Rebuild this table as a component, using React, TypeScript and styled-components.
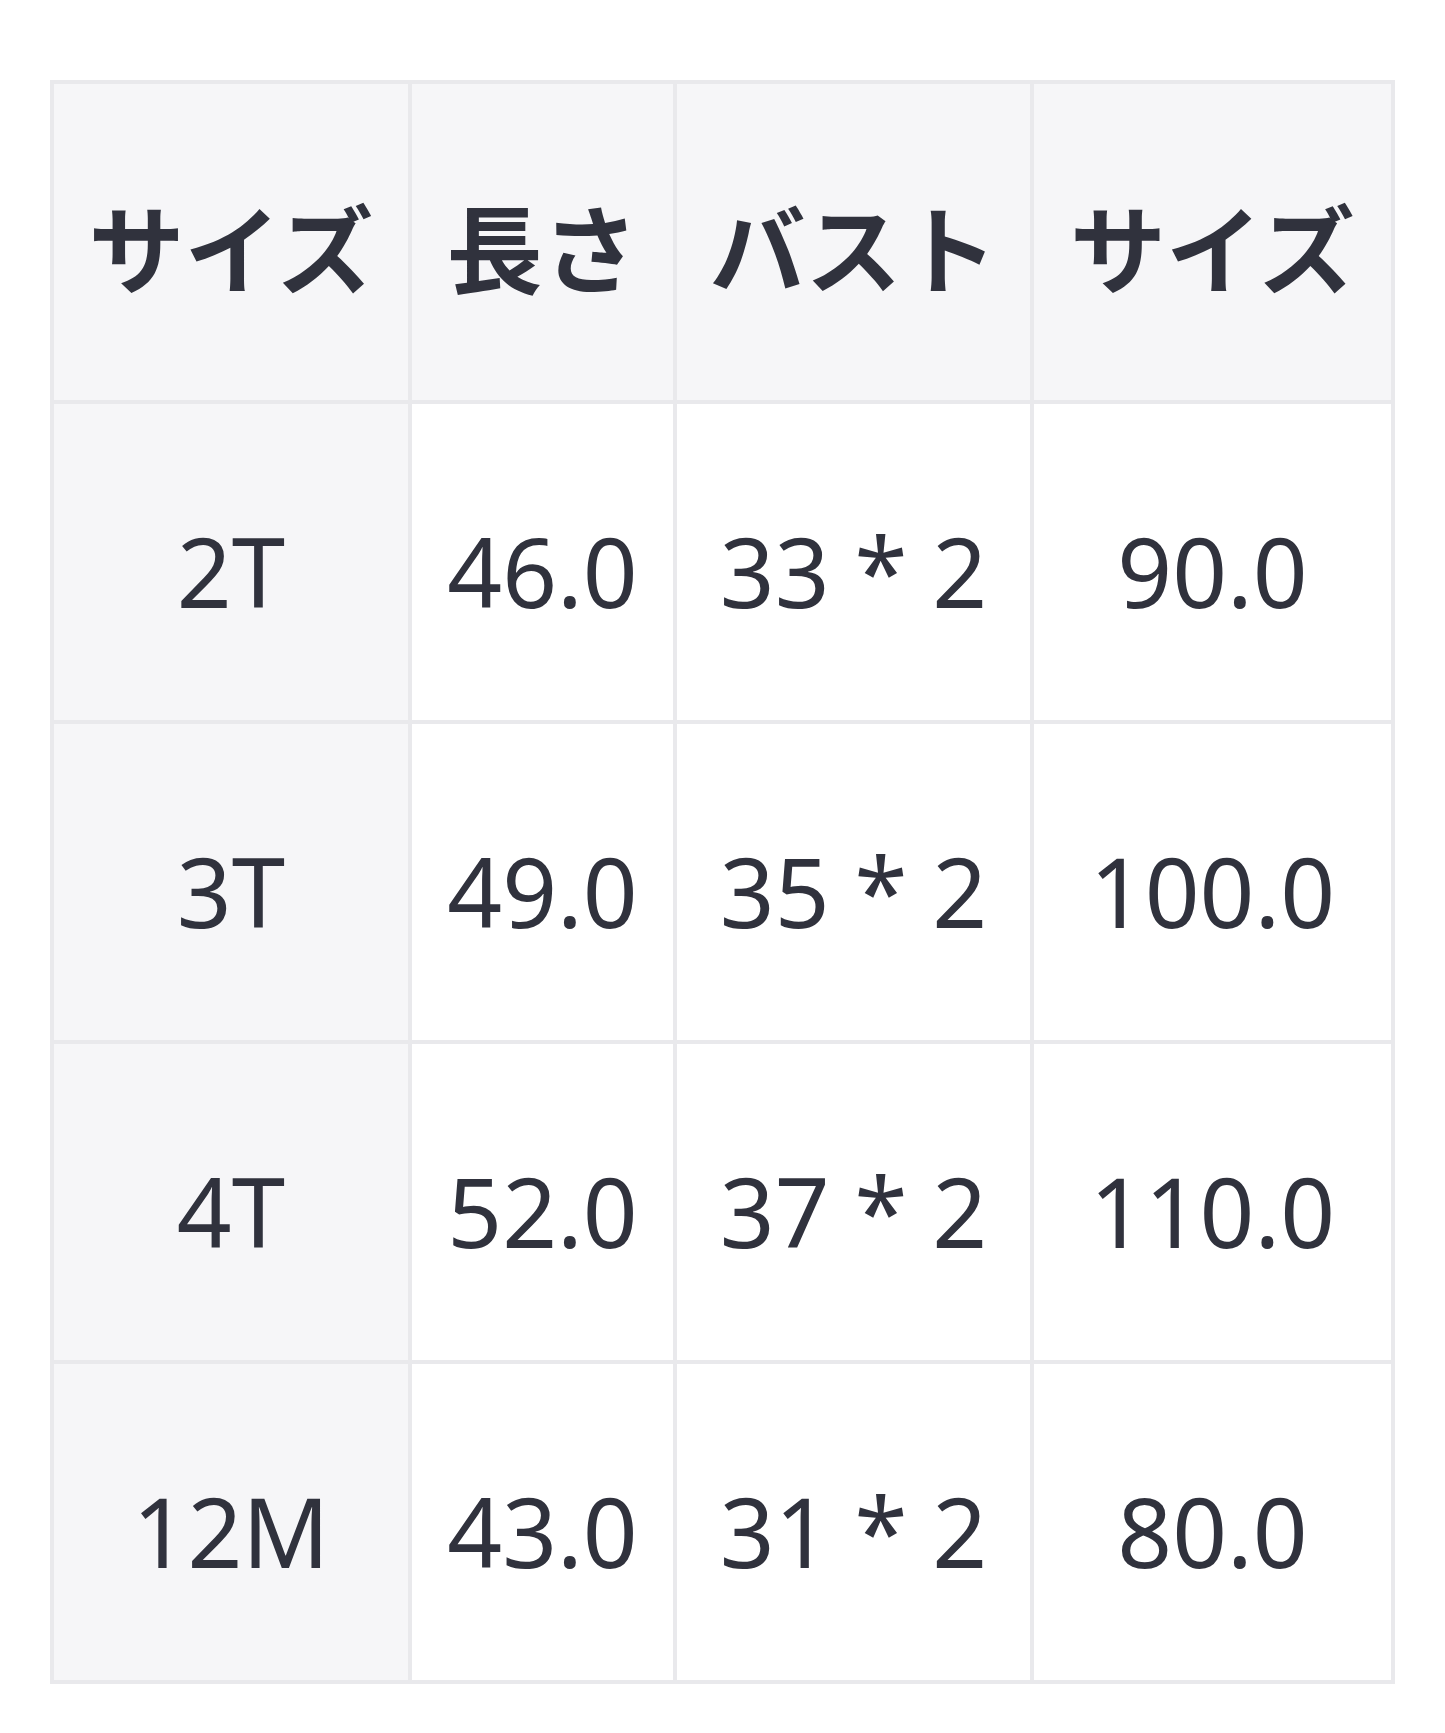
import React from 'react';
import styled, { createGlobalStyle } from 'styled-components';

const GlobalStyle = createGlobalStyle`
  html, body {
    margin: 0;
    padding: 0;
    background: #ffffff;
  }
  body {
    font-family: "Noto Sans", "Noto Sans CJK JP", sans-serif;
    color: #30323d;
  }
`;

const headers = ['サイズ', '長さ', 'バスト', 'サイズ'];

const rows = [
  ['2T', '46.0', '33 * 2', '90.0'],
  ['3T', '49.0', '35 * 2', '100.0'],
  ['4T', '52.0', '37 * 2', '110.0'],
  ['12M', '43.0', '31 * 2', '80.0'],
];

const colWidths = [354, 261, 353, 357];

const App = () => {
  return (
    <>
      <GlobalStyle />
      <Page>
        <SizeTable>
          <colgroup>
            {colWidths.map((w, i) => (
              <col key={i} style={{ width: w + 4 }} />
            ))}
          </colgroup>
          <thead>
            <tr>
              {headers.map((h, i) => (
                <HeadCell key={i}>{h}</HeadCell>
              ))}
            </tr>
          </thead>
          <tbody>
            {rows.map((row, r) => (
              <tr key={r}>
                {row.map((value, c) => (
                  <Cell key={c} $shaded={c === 0}>
                    {value}
                  </Cell>
                ))}
              </tr>
            ))}
          </tbody>
        </SizeTable>
      </Page>
    </>
  );
};

export default App;

const Page = styled.div`
  padding: 80px 0 0 50px;
`;

const SizeTable = styled.table`
  border-collapse: separate;
  border-spacing: 0;
  table-layout: fixed;
  width: 1345px;
  border-top: 4px solid #e9e9ec;
  border-left: 4px solid #e9e9ec;
`;

const HeadCell = styled.th`
  height: 320px;
  padding: 4px 0 0 0;
  box-sizing: border-box;
  background: #f6f6f8;
  border-right: 4px solid #e9e9ec;
  border-bottom: 4px solid #e9e9ec;
  font-family: "Noto Sans CJK JP", "Noto Sans", sans-serif;
  font-size: 96px;
  font-weight: 700;
  text-align: center;
  vertical-align: middle;
  white-space: nowrap;
`;

const Cell = styled.td<{ $shaded?: boolean }>`
  height: 320px;
  padding: 16px 0 0 0;
  box-sizing: border-box;
  background: ${(p) => (p.$shaded ? '#f6f6f8' : '#ffffff')};
  border-right: 4px solid #e9e9ec;
  border-bottom: 4px solid #e9e9ec;
  font-size: 96px;
  font-weight: 400;
  text-align: center;
  vertical-align: middle;
  white-space: nowrap;
`;
